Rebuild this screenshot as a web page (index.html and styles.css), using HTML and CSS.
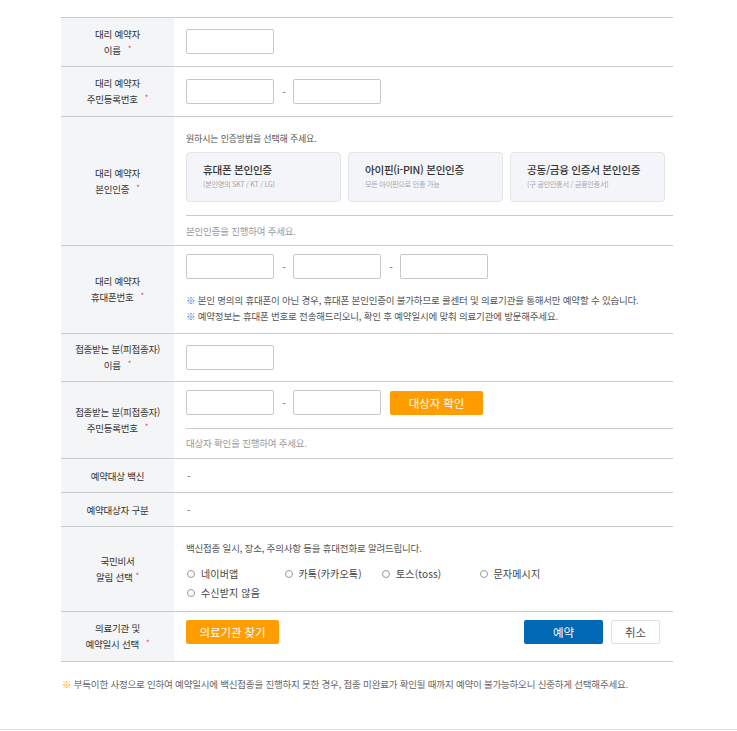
FILE: index.html
```html
<!DOCTYPE html>
<html lang="ko">
<head>
<meta charset="utf-8">
<title>대리 예약</title>
<link rel="stylesheet" href="styles.css">
</head>
<body>
<div class="page">
  <div class="form">
    <div class="row">
      <div class="label"><span>대리 예약자<br>이름<i class="req">*</i></span></div>
      <div class="field p-r1">
        <div class="inputs"><span class="input"></span></div>
      </div>
    </div>
    <div class="row">
      <div class="label"><span>대리 예약자<br>주민등록번호<i class="req">*</i></span></div>
      <div class="field p-r2">
        <div class="inputs"><span class="input"></span><span class="dash">-</span><span class="input"></span></div>
      </div>
    </div>
    <div class="row">
      <div class="label"><span>대리 예약자<br>본인인증<i class="req">*</i></span></div>
      <div class="field p-r3">
        <p class="text small">원하시는 인증방법을 선택해 주세요.</p>
        <div class="auths">
          <div class="auth"><strong>휴대폰 본인인증</strong><small>(본인명의 SKT / KT / LG)</small></div>
          <div class="auth"><strong>아이핀(i-PIN) 본인인증</strong><small>모든 아이핀으로 인증 가능</small></div>
          <div class="auth"><strong>공동/금융 인증서 본인인증</strong><small>(구 공인인증서 / 금융인증서)</small></div>
        </div>
        <p class="hint">본인인증을 진행하여 주세요.</p>
      </div>
    </div>
    <div class="row">
      <div class="label"><span>대리 예약자<br>휴대폰번호<i class="req">*</i></span></div>
      <div class="field p-r4">
        <div class="inputs"><span class="input"></span><span class="dash">-</span><span class="input"></span><span class="dash">-</span><span class="input"></span></div>
        <ul class="notes">
          <li><span class="mark-blue">※</span> 본인 명의의 휴대폰이 아닌 경우, 휴대폰 본인인증이 불가하므로 콜센터 및 의료기관을 통해서만 예약할 수 있습니다.</li>
          <li><span class="mark-blue">※</span> 예약정보는 휴대폰 번호로 전송해드리오니, 확인 후 예약일시에 맞춰 의료기관에 방문해주세요.</li>
        </ul>
      </div>
    </div>
    <div class="row">
      <div class="label"><span>접종받는 분(피접종자)<br>이름<i class="req">*</i></span></div>
      <div class="field p-r5">
        <div class="inputs"><span class="input"></span></div>
      </div>
    </div>
    <div class="row">
      <div class="label"><span>접종받는 분(피접종자)<br>주민등록번호<i class="req">*</i></span></div>
      <div class="field p-r6">
        <div class="inputs"><span class="input"></span><span class="dash">-</span><span class="input"></span><button class="btn orange check">대상자 확인</button></div>
        <p class="hint">대상자 확인을 진행하여 주세요.</p>
      </div>
    </div>
    <div class="row">
      <div class="label"><span>예약대상 백신</span></div>
      <div class="field simple">-</div>
    </div>
    <div class="row">
      <div class="label"><span>예약대상자 구분</span></div>
      <div class="field simple">-</div>
    </div>
    <div class="row">
      <div class="label"><span>국민비서<br>알림 선택<i class="req near">*</i></span></div>
      <div class="field p-r9">
        <p class="text">백신접종 일시, 장소, 주의사항 등을 휴대전화로 알려드립니다.</p>
        <div class="radios">
          <label class="radio"><span class="circle"></span>네이버앱</label>
          <label class="radio"><span class="circle"></span>카톡(카카오톡)</label>
          <label class="radio"><span class="circle"></span>토스(toss)</label>
          <label class="radio"><span class="circle"></span>문자메시지</label>
          <label class="radio"><span class="circle"></span>수신받지 않음</label>
        </div>
      </div>
    </div>
    <div class="row">
      <div class="label"><span>의료기관 및<br>예약일시 선택<i class="req">*</i></span></div>
      <div class="field p-r10">
        <button class="btn orange">의료기관 찾기</button>
        <div class="actions">
          <button class="btn blue">예약</button>
          <button class="btn white">취소</button>
        </div>
      </div>
    </div>
  </div>
  <p class="footnote"><span class="mark-orange">※</span> 부득이한 사정으로 인하여 예약일시에 백신접종을 진행하지 못한 경우, 접종 미완료가 확인될 때까지 예약이 불가능하오니 신중하게 선택해주세요.</p>
</div>
<div class="footer"></div>
</body>
</html>
```

FILE: styles.css
```css
* { box-sizing: border-box; }
body {
  margin: 0;
  background: #fff;
  color: #444;
  font-family: "Noto Sans CJK KR", "Noto Sans", sans-serif;
  font-size: 9.5px;
  letter-spacing: -0.2px;
}
p, ul { margin: 0; padding: 0; }
ul { list-style: none; }
.page {
  width: 612px;
  margin-left: 61px;
  padding-top: 17px;
}
.form { border-top: 1px solid #c9cacd; }
.row {
  display: flex;
  border-bottom: 1px solid #c9cacd;
}
.label {
  width: 113px;
  flex: none;
  background: #f4f5f7;
  display: flex;
  align-items: center;
  justify-content: center;
  text-align: center;
  font-size: 9.5px;
  line-height: 16px;
  color: #333;
  letter-spacing: -0.25px;
}
.req {
  font-style: normal;
  color: #e2475a;
  font-size: 8px;
  margin-left: 7px;
  position: relative;
  top: -2px;
}
.req.near { margin-left: 3px; }
.field {
  flex: 1;
  padding-left: 12px;
  color: #555;
}
.p-r1 { padding-top: 11px; padding-bottom: 12px; }
.p-r2 { padding-top: 12px; padding-bottom: 12px; }
.p-r3 { padding-top: 15px; padding-bottom: 7px; }
.p-r4 { padding-top: 8px; padding-bottom: 9px; }
.p-r5 { padding-top: 11px; padding-bottom: 11px; }
.p-r6 { padding-top: 8px; padding-bottom: 8px; }
.p-r9 { padding-top: 14px; padding-bottom: 9px; }
.p-r10 {
  padding-top: 8px;
  padding-bottom: 17px;
  padding-right: 13px;
  display: flex;
  justify-content: space-between;
  align-items: flex-start;
}
.simple {
  min-height: 33px;
  display: flex;
  align-items: center;
  padding-left: 13px;
}
.inputs {
  display: flex;
  align-items: center;
}
.input {
  display: block;
  width: 88px;
  height: 25px;
  border: 1px solid #c5c8cd;
  border-radius: 2px;
  background: #fff;
}
.dash {
  width: 19px;
  text-align: center;
  color: #555;
  padding-left: 1px;
}
.text { line-height: 14px; }
.text.small { font-size: 9px; }
.auths {
  display: flex;
  gap: 7px;
  margin-top: 6px;
}
.auth {
  width: 155px;
  height: 50px;
  background: #f4f5f8;
  border: 1px solid #e2e5ea;
  border-radius: 4px;
  padding: 9px 0 0 16px;
  display: flex;
  flex-direction: column;
}
.auth strong {
  font-size: 10.6px;
  font-weight: 500;
  color: #333;
  line-height: 16px;
  letter-spacing: -0.3px;
}
.auth small {
  font-size: 7.2px;
  color: #a5a8ad;
  line-height: 12px;
  letter-spacing: -0.3px;
}
.hint {
  margin-top: 13px;
  border-top: 1px solid #c9cacd;
  padding-top: 7px;
  line-height: 14px;
  color: #999;
}
.p-r3 .hint { padding-top: 8px; }
.notes {
  margin-top: 13px;
  line-height: 16px;
  color: #555;
}
.mark-blue { color: #2a78c8; }
.mark-orange { color: #ff9c00; }
.btn {
  font-family: inherit;
  border: 0;
  border-radius: 2px;
  height: 24px;
  font-size: 11.5px;
  letter-spacing: -0.1px;
  cursor: pointer;
  padding: 0;
}
.orange {
  background: #ff9d00;
  color: #fff;
  width: 93px;
}
.check { margin-left: 9px; }
.blue {
  background: #0068b5;
  color: #fff;
  width: 79px;
}
.white {
  background: #fff;
  border: 1px solid #dcdfe4;
  color: #555;
  width: 49px;
}
.actions {
  display: flex;
  gap: 8px;
}
.radios {
  display: grid;
  grid-template-columns: repeat(4, 97.5px);
  grid-auto-rows: 19px;
  margin-top: 9px;
}
.radio {
  display: flex;
  align-items: center;
  color: #444;
  padding-left: 1px;
  font-size: 10px;
  letter-spacing: 0.15px;
}
.circle {
  width: 8px;
  height: 8px;
  border: 1px solid #999;
  border-radius: 50%;
  margin-right: 6px;
  flex: none;
}
.footnote {
  margin-top: 15px;
  line-height: 14px;
  color: #666;
  margin-left: 1px;
}
.footer {
  margin-top: 38px;
  border-top: 1px solid #dcdcdc;
  height: 40px;
}
```
